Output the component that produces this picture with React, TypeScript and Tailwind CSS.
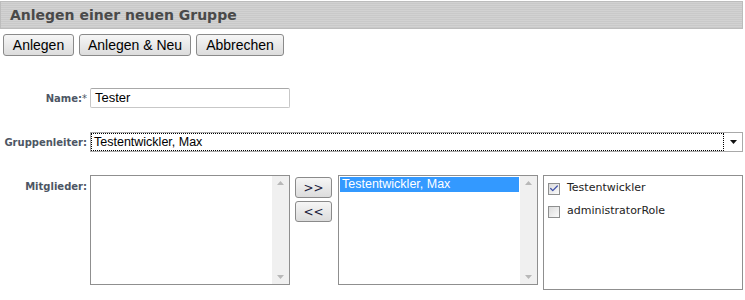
import { Check } from 'lucide-react'

const verdana = "font-['DejaVu_Sans',Verdana,sans-serif]"
const arial = "font-['Liberation_Sans',Arial,sans-serif]"

function Label({ children }: { children: React.ReactNode }) {
  return (
    <div className={`w-[87px] shrink-0 text-right text-[10px] font-bold text-[#4d5664] ${verdana}`}>
      {children}
    </div>
  )
}

function Btn({ children, className = '' }: { children: React.ReactNode; className?: string }) {
  return (
    <button
      className={`h-[22px] rounded-[3px] border border-[#8a8a8a] bg-gradient-to-b from-[#f6f6f6] to-[#dcdcdc] text-[14px] text-black ${arial} ${className}`}
    >
      {children}
    </button>
  )
}

function Scrollbar() {
  return (
    <div className="flex w-[17px] flex-col items-center justify-between bg-[#f0f0f0] py-[5px]">
      <svg width="7" height="4" viewBox="0 0 7 4">
        <path d="M3.5 0 L7 4 L0 4 Z" fill="#b8b8b8" />
      </svg>
      <svg width="7" height="4" viewBox="0 0 7 4">
        <path d="M0 0 L7 0 L3.5 4 Z" fill="#b8b8b8" />
      </svg>
    </div>
  )
}

function ListBox({ items }: { items: string[] }) {
  return (
    <div className="flex h-[110px] w-[200px] border border-[#8f8f8f] bg-white">
      <div className="flex-1 p-px">
        {items.map((i) => (
          <div key={i} className={`h-[15px] bg-[#3399ff] pl-[2px] text-[12.5px] leading-[15px] text-white ${arial}`}>
            {i}
          </div>
        ))}
      </div>
      <Scrollbar />
    </div>
  )
}

function CheckItem({ label, checked }: { label: string; checked?: boolean }) {
  return (
    <div className="flex h-[23px] items-center gap-[7px]">
      <div className="flex h-[12px] w-[12px] items-center justify-center border border-[#8e8f8f] bg-gradient-to-br from-[#dcdcdc] to-[#fbfbfb]">
        {checked && <Check size={11} strokeWidth={3} className="text-[#3d4fa8]" />}
      </div>
      <span className={`text-[11px] text-[#222] ${verdana}`}>{label}</span>
    </div>
  )
}

const arrowBtn = `h-[21px] w-[37px] rounded-[3px] border border-[#8a8a8a] bg-gradient-to-b from-[#f6f6f6] to-[#dcdcdc] text-[12px] text-[#1a1a3a] ${verdana}`

export default function App() {
  return (
    <div className="h-[300px] w-[745px] bg-white">
      {/* Header */}
      <div className="mr-[2px] mt-px h-[28px] border border-[#bcbcbc] bg-[repeating-linear-gradient(to_bottom,#d2d2d2_0px,#d2d2d2_1px,#c9c9c9_1px,#c9c9c9_2px)] pl-[9px]">
        <span className={`text-[14px] font-bold leading-[26px] text-[#4a4a4a] ${verdana}`}>Anlegen einer neuen Gruppe</span>
      </div>

      {/* Actions */}
      <div className="mt-[5px] flex gap-[5px] pl-[3px]">
        <Btn className="w-[71px]">Anlegen</Btn>
        <Btn className="w-[112px]">Anlegen &amp; Neu</Btn>
        <Btn className="w-[88px]">Abbrechen</Btn>
      </div>

      {/* Name */}
      <div className="mt-[32px] flex items-center gap-[3px]">
        <Label>
          Name:<span className="font-normal">*</span>
        </Label>
        <div className={`h-[20px] w-[200px] rounded-[2px] border border-[#c7c7c7] border-t-[#a8a8a8] bg-white pl-[4px] text-[13px] leading-[18px] text-black ${arial}`}>
          Tester
        </div>
      </div>

      {/* Gruppenleiter */}
      <div className="mt-[24px] flex items-center gap-[3px]">
        <Label>Gruppenleiter:</Label>
        <div className="flex h-[20px] w-[653px] border border-[#a9a9a9] bg-white">
          <div className={`flex-1 border border-dotted border-black pl-[2px] text-[12.5px] leading-[16px] text-black ${arial}`}>
            Testentwickler, Max
          </div>
          <div className="flex w-[18px] items-center justify-center">
            <svg width="7" height="4" viewBox="0 0 7 4">
              <path d="M0 0 L7 0 L3.5 4 Z" fill="#111" />
            </svg>
          </div>
        </div>
      </div>

      {/* Mitglieder */}
      <div className="mt-[23px] flex items-start gap-[3px]">
        <div className="pt-[4px]">
          <Label>Mitglieder:</Label>
        </div>
        <ListBox items={[]} />
        <div className="ml-[2px] mt-[2px] flex flex-col gap-[3px]">
          <button className={arrowBtn}>&gt;&gt;</button>
          <button className={arrowBtn}>&lt;&lt;</button>
        </div>
        <div className="ml-[3px]">
          <ListBox items={['Testentwickler, Max']} />
        </div>
        <div className="ml-[2px] h-[115px] w-[200px] border border-[#8f8f8f] bg-white px-[4px] pt-[1px]">
          <CheckItem label="Testentwickler" checked />
          <CheckItem label="administratorRole" />
        </div>
      </div>
    </div>
  )
}
